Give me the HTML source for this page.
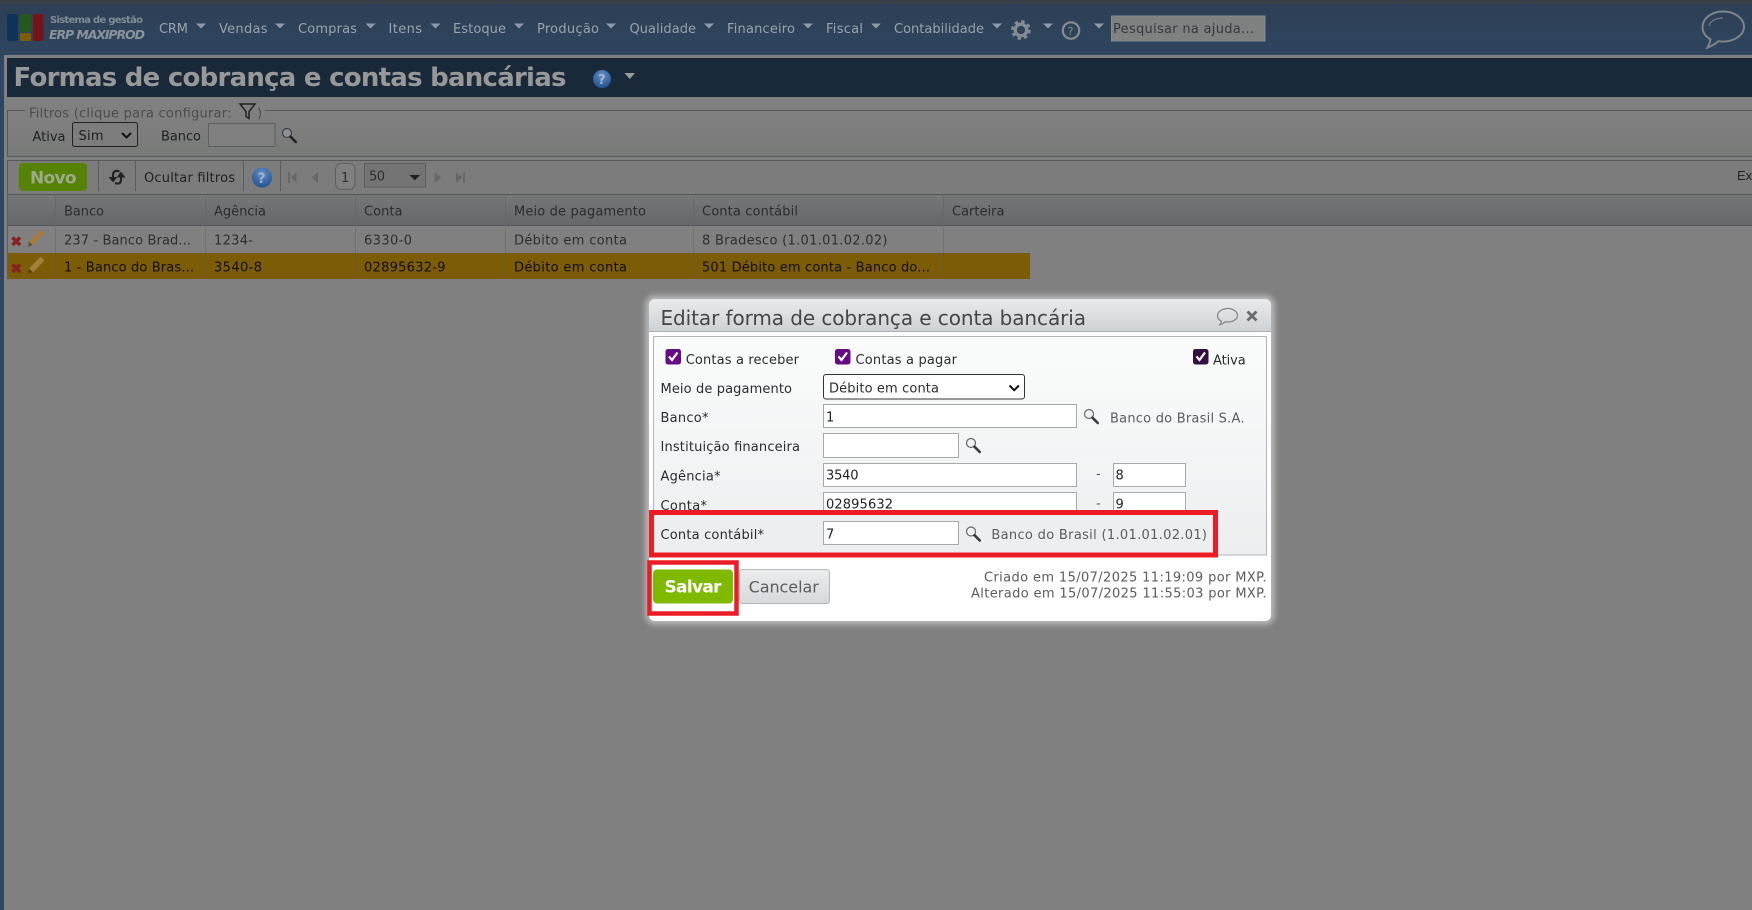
<!DOCTYPE html>
<html lang="pt-BR"><head><meta charset="utf-8"><title>Formas de cobrança e contas bancárias</title>
<style>
html,body{margin:0;padding:0;width:1752px;height:910px;overflow:hidden;background:#808080}
svg{display:block}
text{font-family:"DejaVu Sans","Liberation Sans",sans-serif;font-size:13px;white-space:pre}
.m{fill:#98a3ad}
.h{fill:#2c2c30}
.r{fill:#2e2e2e}
.s{fill:#0f0f05}
.l{fill:#2a2c2e}
.g{fill:#5a5c5e}
.v{fill:#1e2022}
</style></head><body>
<svg xmlns="http://www.w3.org/2000/svg" width="1752" height="910" viewBox="0 0 1752 910">
<defs>
<linearGradient id="bar" x1="0" y1="0" x2="0" y2="1"><stop offset="0" stop-color="#2d3f56"/><stop offset="1" stop-color="#2f455f"/></linearGradient>
<linearGradient id="fs" x1="0" y1="0" x2="0" y2="1"><stop offset="0" stop-color="#808080"/><stop offset="1" stop-color="#787a78"/></linearGradient>
<linearGradient id="th" x1="0" y1="0" x2="0" y2="1"><stop offset="0" stop-color="#777878"/><stop offset="1" stop-color="#66676a"/></linearGradient>
<linearGradient id="mh" x1="0" y1="0" x2="0" y2="1"><stop offset="0" stop-color="#e9eaeb"/><stop offset="1" stop-color="#cfd2d5"/></linearGradient>
<linearGradient id="mb" x1="0" y1="0" x2="0" y2="1"><stop offset="0" stop-color="#fbfcfc"/><stop offset="1" stop-color="#eceeef"/></linearGradient>
<linearGradient id="cn" x1="0" y1="0" x2="0" y2="1"><stop offset="0" stop-color="#eceded"/><stop offset="1" stop-color="#d6d8da"/></linearGradient>
<radialGradient id="hb" cx=".5" cy=".3" r=".8"><stop offset="0" stop-color="#5f8fc8"/><stop offset="1" stop-color="#1c4a8c"/></radialGradient>
<symbol id="mag" viewBox="0 0 15 15" overflow="visible">
<circle cx="5" cy="5" r="4.500" fill="#eef2f5" stroke="#666" stroke-width="1.200"/><path d="M8.500 8.700l5.300 5.300" stroke="#3a3a3a" stroke-width="2.600" stroke-linecap="round"/>
</symbol>
</defs>

<rect width="1752" height="910" fill="#808080"/>
<!-- top -->
<rect width="1752" height="4" fill="#3b3f49"/>
<rect y="4" width="1752" height="51" fill="url(#bar)"/>
<rect y="55" width="4" height="855" fill="#2f4560"/>
<!-- logo -->
<rect x="7" y="14" width="11" height="27" rx="2" fill="#0f3358"/>
<rect x="20" y="14" width="11" height="18" rx="2" fill="#23591c"/>
<rect x="20" y="33" width="11" height="8" rx="1.500" fill="#7d5c08"/>
<rect x="33" y="14" width="10.500" height="27" rx="2" fill="#751418"/>
<text x="50" y="23" textLength="93" style="font-size:10px;font-weight:700;fill:#828b94">Sistema de gestão</text>
<text x="49" y="39" textLength="96" style="font-size:12.500px;font-weight:700;font-style:italic;fill:#8a939c">ERP MAXIPROD</text>
<!-- menu -->
<g>
<text class="m" x="159" y="33" textLength="29">CRM</text>
<text class="m" x="219" y="33" textLength="48.500">Vendas</text>
<text class="m" x="298" y="33" textLength="59">Compras</text>
<text class="m" x="388.500" y="33" textLength="33.500">Itens</text>
<text class="m" x="453" y="33" textLength="53">Estoque</text>
<text class="m" x="537" y="33" textLength="62">Produção</text>
<text class="m" x="629.500" y="33" textLength="66.500">Qualidade</text>
<text class="m" x="727" y="33" textLength="68">Financeiro</text>
<text class="m" x="826" y="33" textLength="37">Fiscal</text>
<text class="m" x="894" y="33" textLength="90">Contabilidade</text>
</g>
<g fill="#8f9aa4">
<path d="M196 23.500h10l-5 5z"/><path d="M275 23.500h10l-5 5z"/><path d="M365.500 23.500h10l-5 5z"/><path d="M430.500 23.500h10l-5 5z"/><path d="M514 23.500h10l-5 5z"/><path d="M606 23.500h10l-5 5z"/><path d="M704 23.500h10l-5 5z"/><path d="M803 23.500h10l-5 5z"/><path d="M871 23.500h10l-5 5z"/><path d="M992 23.500h10l-5 5z"/><path d="M1043 23.500h10l-5 5z"/><path d="M1094 23.500h10l-5 5z"/>
</g>
<!-- gear -->
<circle cx="1021" cy="30" r="5.800" fill="none" stroke="#848c93" stroke-width="3.400"/>
<circle cx="1021" cy="30" r="8.600" fill="none" stroke="#848c93" stroke-width="2.600" stroke-dasharray="3.400 3.350"/>
<!-- help -->
<circle cx="1071" cy="30.500" r="8.200" fill="none" stroke="#848c93" stroke-width="2.200"/>
<text x="1067.600" y="35" style="font-size:11px;fill:#848c93">?</text>
<!-- search -->
<rect x="1111.500" y="16" width="153.500" height="25" fill="#7f8080" stroke="#858a90" stroke-width="1"/>
<text x="1113" y="33" textLength="141" style="fill:#333a42">Pesquisar na ajuda...</text>
<!-- chat -->
<path d="M1723 11.500c-11.500 0-20.500 7-20.500 15.500 0 5 3 9.500 8 12.300-.4 3-1.600 5.600-3 8.200 4.200-1.300 7.800-3.800 10.700-6.300 1.600.2 3.200.4 4.800.4 11.500 0 21-6.700 21-14.900 0-8.500-9.500-15.200-21-15.200z" fill="none" stroke="#7f8488" stroke-width="2"/>
<path d="M1709 26c1-4.500 5-7.500 14-8" fill="none" stroke="#70777d" stroke-width="1.200"/>

<!-- page frame -->
<rect x="4" y="55" width="1748" height="3" fill="#808080"/>
<rect x="7" y="58" width="1745" height="39" fill="#19293a"/>
<text x="13.500" y="86" textLength="553" style="font-size:26px;font-weight:700;fill:#989898">Formas de cobrança e contas bancárias</text>
<circle cx="602" cy="79" r="9" fill="url(#hb)"/>
<text x="598" y="84" style="font-size:13px;font-weight:700;fill:#a8b4c4">?</text>
<path d="M624.500 73h10.500l-5.200 6z" fill="#9a9a9a"/>

<!-- filters -->
<rect x="7.500" y="110.500" width="1745" height="46" fill="url(#fs)" stroke="#56585c"/>
<rect x="25" y="100" width="240" height="20" fill="#808080"/>
<text x="29" y="117.500" textLength="202.500" style="fill:#4a4c4e">Filtros (clique para configurar:</text>
<path d="M240 104h15l-6 7.500v7l-3-2v-5z" fill="none" stroke="#222" stroke-width="1.500"/>
<text x="257" y="117.500" style="fill:#4a4c4e">)</text>
<text x="32.500" y="141" textLength="33" class="v">Ativa</text>
<rect x="72.500" y="122.500" width="65" height="24" rx="2" fill="#7c7d7c" stroke="#222"/>
<text x="78.500" y="140" textLength="25" class="v">Sim</text>
<path d="M122 133l4.500 4.500 4.500-4.500" fill="none" stroke="#111" stroke-width="2"/>
<text x="161" y="140.500" textLength="40" class="v">Banco</text>
<rect x="208.500" y="123.500" width="66.500" height="23" fill="#808080" stroke="#5d5f61"/>
<circle cx="287" cy="133" r="4.500" fill="#8d9094" stroke="#3e3f40" stroke-width="1.200"/><path d="M290.500 136.700l5.300 5.300" stroke="#222" stroke-width="2.600" stroke-linecap="round"/>

<!-- toolbar -->
<rect x="7.500" y="160.500" width="1745" height="34" fill="#7c7c7c" stroke="#56585c"/>
<rect x="19" y="163" width="68" height="28" rx="4" fill="#568206"/>
<text x="30" y="183.500" textLength="46.500" style="font-size:17px;font-weight:700;fill:#9cab8a">Novo</text>
<g stroke="#5a5c5e"><path d="M98.500 160v31"/><path d="M135.500 160v31"/><path d="M243.500 160v31"/><path d="M280.500 160v31"/></g>
<g fill="none" stroke="#232323" stroke-width="2.200">
<path d="M119.500 171.500c-4-1.500-6.500 0-6.500 3.500v4"/>
<path d="M115 183c4 1.500 6 0 6-3.500v-3.500"/>
</g>
<path d="M108.500 177h9l-4.500 5.500z" fill="#232323"/>
<path d="M116.500 177.500h9l-4.500-6z" fill="#232323"/>
<text x="144" y="182" textLength="91" class="v">Ocultar filtros</text>
<circle cx="262" cy="177.500" r="10" fill="url(#hb)"/>
<text x="257.500" y="183" style="font-size:14px;font-weight:700;fill:#a5b0c2">?</text>
<g fill="#656769">
<rect x="288" y="172" width="2" height="11"/><path d="M296.500 172v11l-5.500-5.500z"/>
<path d="M318 172v11l-6-5.500z"/>
<path d="M435 172v11l6-5.500z"/>
<path d="M456 172v11l6-5.500z"/><rect x="463" y="172" width="2" height="11"/>
</g>
<rect x="335.500" y="163.500" width="19.500" height="26" rx="6" fill="#808080" stroke="#5c5e60"/>
<text x="341" y="182" class="r">1</text>
<rect x="364.500" y="163.500" width="61" height="23.500" fill="#747474" stroke="#5c5e60"/>
<text x="369" y="180.500" textLength="16" class="r">50</text>
<path d="M409.500 175h10.500l-5.200 5.200z" fill="#1f1f1f"/>
<text x="1737" y="180" style="font-family:'Liberation Sans',sans-serif;font-size:13px;fill:#242424">Exportar</text>

<!-- table -->
<rect x="7.500" y="194" width="1745" height="31" fill="url(#th)"/>
<path d="M7.500 194.500H1752M7.500 225.500H1752" stroke="#55565a"/>
<rect x="7.500" y="253" width="1022.500" height="26" fill="#7d5c08"/>
<g stroke="#66686a"><path d="M55.500 194v31M205.500 194v31M355.500 194v31M505.500 194v31M693.500 194v31M943.500 194v31"/></g>
<g stroke="#6e7072"><path d="M55.500 225v28M205.500 225v28M355.500 225v28M505.500 225v28M693.500 225v28M943.500 225v28"/></g>
<g stroke="#6e5a28"><path d="M55.500 253v26M205.500 253v26M355.500 253v26M505.500 253v26M693.500 253v26M943.500 253v26"/></g>
<path d="M7.500 194v85" stroke="#5a5c5e"/>
<g class="h">
<text class="h" x="64" y="215.500" textLength="40">Banco</text>
<text class="h" x="214" y="215.500" textLength="52">Agência</text>
<text class="h" x="364" y="215.500" textLength="38.500">Conta</text>
<text class="h" x="514" y="215.500" textLength="132">Meio de pagamento</text>
<text class="h" x="702" y="215.500" textLength="96">Conta contábil</text>
<text class="h" x="952" y="215.500" textLength="52.500">Carteira</text>
</g>
<text class="r" x="64" y="244.500" textLength="127">237 - Banco Brad...</text>
<text class="r" x="214" y="244.500" textLength="39">1234-</text>
<text class="r" x="364" y="244.500" textLength="48">6330-0</text>
<text class="r" x="514" y="244.500" textLength="113">Débito em conta</text>
<text class="r" x="702" y="244.500" textLength="185.500">8 Bradesco (1.01.01.02.02)</text>
<text class="s" x="64" y="271.500" textLength="130">1 - Banco do Bras...</text>
<text class="s" x="214" y="271.500" textLength="48">3540-8</text>
<text class="s" x="364" y="271.500" textLength="81.500">02895632-9</text>
<text class="s" x="514" y="271.500" textLength="113">Débito em conta</text>
<text class="s" x="702" y="271.500" textLength="228">501 Débito em conta - Banco do...</text>
<g stroke="#8a1f22" stroke-width="3.400"><path d="M12.500 237.500l7.500 7.500M20 237.500l-7.500 7.500"/><path d="M12.500 264.500l7.500 7.500M20 264.500l-7.500 7.500"/></g>
<path d="M42.500 231.500L31 243.500" stroke="#a87a40" stroke-width="5.400"/>
<path d="M29 241.500l3.700 3.700-4.700 1.600z" fill="#5c5040"/>
<path d="M42.500 258.500L31 270.500" stroke="#a5803a" stroke-width="5.400"/>
<path d="M29 268.500l3.700 3.700-4.700 1.600z" fill="#55431a"/>

<!-- modal -->
<rect x="645.500" y="295.500" width="629" height="329" rx="9" fill="#fff" opacity=".45" style="filter:blur(3px)"/>
<rect x="649" y="299" width="622" height="322" rx="6" fill="#fff"/>
<path d="M649 331.500V305a6 6 0 0 1 6-6h610a6 6 0 0 1 6 6v26.500z" fill="url(#mh)"/>
<path d="M649 331.500H1271" stroke="#a9afb5"/>
<text x="660.500" y="325" textLength="425.500" style="font-size:20px;fill:#43474b">Editar forma de cobrança e conta bancária</text>
<path d="M1228 308.500c-5.800 0-10.500 3.200-10.500 7.200 0 2.500 1.600 4.400 4 5.600-.2 1.300-.8 2.500-1.600 3.400 2.300-.5 4-1.600 5.500-2.900.8.100 1.700.2 2.600.2 5.300 0 9.500-3 9.500-6.300 0-4-4.200-7.200-9.500-7.200z" fill="none" stroke="#85898d" stroke-width="1.300"/>
<path d="M1247.500 311.500l9 9M1256.500 311.500l-9 9" stroke="#6a6d70" stroke-width="2.800"/>
<rect x="653.500" y="336.500" width="613" height="218.500" fill="url(#mb)" stroke="#b0b7be"/>

<!-- checkboxes -->
<rect x="665.500" y="349" width="15.500" height="15.500" rx="2.500" fill="#660a86"/>
<path d="M669 356.500l3 3.500 5.500-7.500" fill="none" stroke="#fff" stroke-width="2.200"/>
<text class="l" x="685.700" y="364" textLength="113.300">Contas a receber</text>
<rect x="835" y="349" width="15.500" height="15.500" rx="2.500" fill="#660a86"/>
<path d="M838.500 356.500l3 3.500 5.500-7.500" fill="none" stroke="#fff" stroke-width="2.200"/>
<text class="l" x="855.500" y="364" textLength="101.500">Contas a pagar</text>
<rect x="1193" y="349" width="15.500" height="15.500" rx="2.500" fill="#33103f"/>
<path d="M1196.500 356.500l3 3.500 5.500-7.500" fill="none" stroke="#fff" stroke-width="2.200"/>
<text class="l" x="1213" y="364.500" textLength="32.700">Ativa</text>

<text class="l" x="660.500" y="393" textLength="131.500">Meio de pagamento</text>
<rect x="823.500" y="374.500" width="201" height="24.500" rx="2.500" fill="#fff" stroke="#333"/>
<text class="l" x="829" y="392.500" textLength="110">Débito em conta</text>
<path d="M1009.500 385.500l4.700 4.700 4.700-4.700" fill="none" stroke="#111" stroke-width="2"/>

<text class="l" x="660.500" y="422" textLength="48">Banco*</text>
<rect x="823.500" y="404.500" width="253" height="23" fill="#fff" stroke="#a8a8a8"/>
<text class="v" x="826" y="421.500">1</text>
<use href="#mag" x="1084" y="409" width="15" height="15"/>
<text class="g" x="1110" y="422.500" textLength="134.500">Banco do Brasil S.A.</text>

<text class="l" x="660.500" y="451" textLength="139.500">Instituição financeira</text>
<rect x="823.500" y="433.500" width="135" height="24" fill="#fff" stroke="#a8a8a8"/>
<use href="#mag" x="966" y="438" width="15" height="15"/>

<text class="l" x="660.500" y="480.500" textLength="60">Agência*</text>
<rect x="823.500" y="463.500" width="253" height="23" fill="#fff" stroke="#a8a8a8"/>
<text class="v" x="826" y="479.500" textLength="32.500">3540</text>
<text class="g" x="1096" y="478">-</text>
<rect x="1113.500" y="463.500" width="72" height="23" fill="#fff" stroke="#a8a8a8"/>
<text class="v" x="1115.500" y="479.500">8</text>

<text class="l" x="660.500" y="510" textLength="46.500">Conta*</text>
<rect x="823.500" y="492.500" width="253" height="23" fill="#fff" stroke="#a8a8a8"/>
<text class="v" x="826" y="508.500" textLength="67">02895632</text>
<text class="g" x="1096" y="507.500">-</text>
<rect x="1113.500" y="492.500" width="72" height="23" fill="#fff" stroke="#a8a8a8"/>
<text class="v" x="1115.500" y="508.500">9</text>

<!-- red highlight 1 -->
<rect x="651.500" y="512.500" width="564" height="42.500" fill="#edeef0" stroke="#ec1c24" stroke-width="5"/>
<text class="l" x="660.500" y="539" textLength="103.500">Conta contábil*</text>
<rect x="823.500" y="521.500" width="135" height="23" fill="#fff" stroke="#a8a8a8"/>
<text class="v" x="826" y="538.500">7</text>
<use href="#mag" x="966" y="526.500" width="15" height="15"/>
<text class="g" x="991.400" y="539" textLength="215.600">Banco do Brasil (1.01.01.02.01)</text>

<!-- buttons -->
<rect x="739.500" y="569.500" width="90" height="34" rx="3" fill="url(#cn)" stroke="#b4b7ba"/>
<text x="748.600" y="592.500" textLength="70.200" style="font-size:16px;fill:#5a5d60">Cancelar</text>
<rect x="649.500" y="562.500" width="87" height="51" fill="#fff" stroke="#ec1c24" stroke-width="4.500"/>
<rect x="653" y="569.500" width="80" height="34" rx="4" fill="#7fba00"/>
<text x="664.500" y="592.500" textLength="57" style="font-size:17px;font-weight:700;fill:#fff">Salvar</text>
<text class="g" x="984" y="581.500" textLength="282.500">Criado em 15/07/2025 11:19:09 por MXP.</text>
<text class="g" x="971" y="597.500" textLength="295.500">Alterado em 15/07/2025 11:55:03 por MXP.</text>
</svg>
</body></html>
